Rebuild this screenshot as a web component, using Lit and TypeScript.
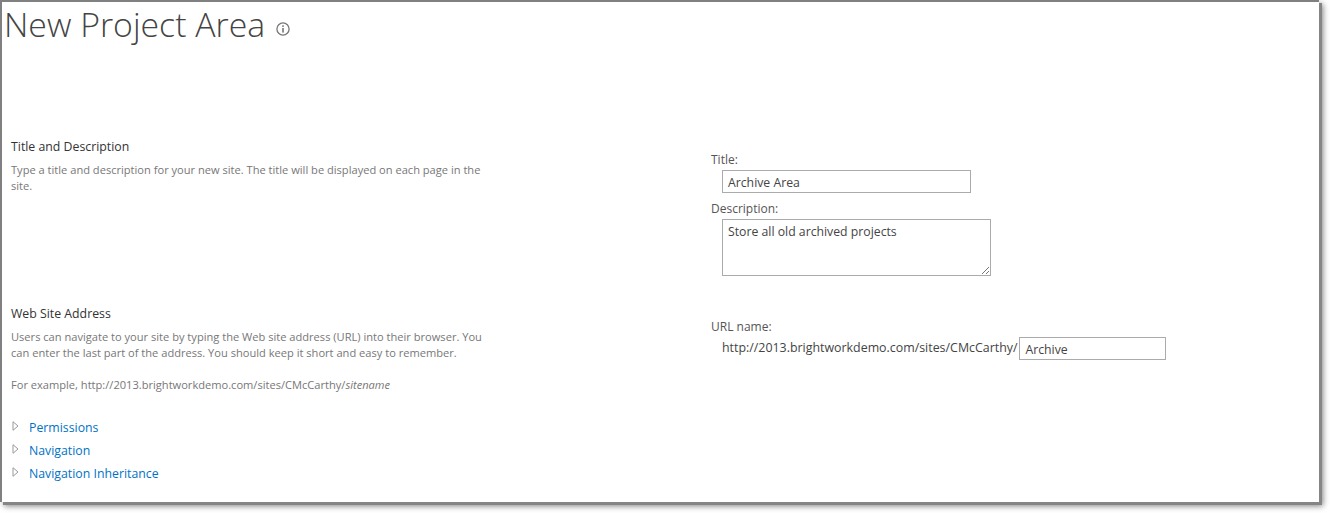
import { LitElement, html, css } from "lit";
import { customElement } from "lit/decorators.js";

@customElement("app-root")
export class AppRoot extends LitElement {
  static styles = css`
    :host { display: block; width: 1330px; height: 513px; overflow: hidden; background: #fff; font-family: "Open Sans", "Noto Sans", sans-serif; font-size: 12px; color: #777; }
    .frame { box-sizing: border-box; width: 1319px; height: 502px; background: #fff; border-top: 2px solid #808080; border-left: 2px solid #808080; box-shadow: 3px 3px 0 #858585, 4px 4px 6px rgba(0,0,0,.5); display: flex; flex-direction: column; }
    .head { display: flex; align-items: center; height: 45px; padding-left: 2px; }
    h1 { margin: 0; font-size: 33.8px; font-weight: 300; line-height: 45px; color: #444; }
    .info { margin-left: 11px; margin-top: 8px; display: block; }
    .rows { padding: 91px 0 0 9px; }
    .row { display: grid; grid-template-columns: 700px 1fr; }
    .row.first { height: 167px; }
    .row.second { height: 107px; }
    h2 { margin: 0; font-size: 12.3px; font-weight: 400; line-height: 18px; color: #333; }
    .desc { margin: 6px 0 0; width: 472px; font-size: 11.1px; line-height: 16px; color: #777; }
    .desc.gap { margin-top: 16px; }
    label { display: block; font-size: 12px; line-height: 16px; color: #555; }
    .lead { margin-top: 14px; }
    .field { margin-left: 11px; box-sizing: border-box; border: 1px solid #ababab; color: #444; font: inherit; font-size: 12.25px; padding: 0 5px; display: block; background: #fff; }
    .title-field { width: 249px; height: 23px; margin-top: 2px; margin-bottom: 8px; line-height: 23px; }
    .desc-field { width: 269px; height: 57px; margin-top: 2px; line-height: 24px; position: relative; }
    .grip { position: absolute; right: 0; bottom: 0; display: block; }
    .url { display: flex; align-items: flex-start; margin-top: 2px; }
    .url span { margin-left: 11px; font-size: 12.4px; line-height: 22px; color: #444; }
    .url-field { margin-left: 2px; width: 147px; height: 23px; line-height: 23px; }
    .links { display: flex; flex-direction: column; margin-top: 4px; }
    .link { display: flex; align-items: center; height: 23px; color: #0072c6; font-size: 12.3px; text-decoration: none; }
    .link svg { margin-left: 1px; margin-right: 10px; margin-top: -4px; }
  `;

  render() {
    return html`<div class="frame">
      <div class="head">
        <h1>New Project Area</h1>
        <svg class="info" width="14" height="14" viewBox="0 0 14 14" fill="none">
          <circle cx="7" cy="7" r="6.1" stroke="#777" stroke-width="1.3" />
          <rect x="6.2" y="6" width="1.6" height="4.6" fill="#777" />
          <rect x="6.2" y="3.3" width="1.6" height="1.6" fill="#777" />
        </svg>
      </div>
      <div class="rows">
        <div class="row first">
          <div>
            <h2>Title and Description</h2>
            <p class="desc">Type a title and description for your new site. The title will be displayed on each page in the site.</p>
          </div>
          <div>
            <label class="lead">Title:</label>
            <div class="field title-field">Archive Area</div>
            <label>Description:</label>
            <div class="field desc-field">Store all old archived projects
              <svg class="grip" width="10" height="10" viewBox="0 0 10 10" stroke="#777" stroke-width="1">
                <path d="M2 9 L9 2 M6 9 L9 6" />
              </svg>
            </div>
          </div>
        </div>
        <div class="row second">
          <div>
            <h2>Web Site Address</h2>
            <p class="desc">Users can navigate to your site by typing the Web site address (URL) into their browser. You can enter the last part of the address. You should keep it short and easy to remember.</p>
            <p class="desc gap">For example, http://2013.brightworkdemo.com/sites/CMcCarthy/<i>sitename</i></p>
          </div>
          <div>
            <label class="lead">URL name:</label>
            <div class="url"><span>http://2013.brightworkdemo.com/sites/CMcCarthy/</span><div class="field url-field">Archive</div></div>
          </div>
        </div>
        <div class="links">
          ${["Permissions", "Navigation", "Navigation Inheritance"].map(
            (t) => html`<a class="link"><svg width="7" height="10" viewBox="0 0 7 10" fill="#fff" stroke="#999"><path d="M1 .7 L6 5 L1 9.3 Z" /></svg>${t}</a>`
          )}
        </div>
      </div>
    </div>`;
  }
}
